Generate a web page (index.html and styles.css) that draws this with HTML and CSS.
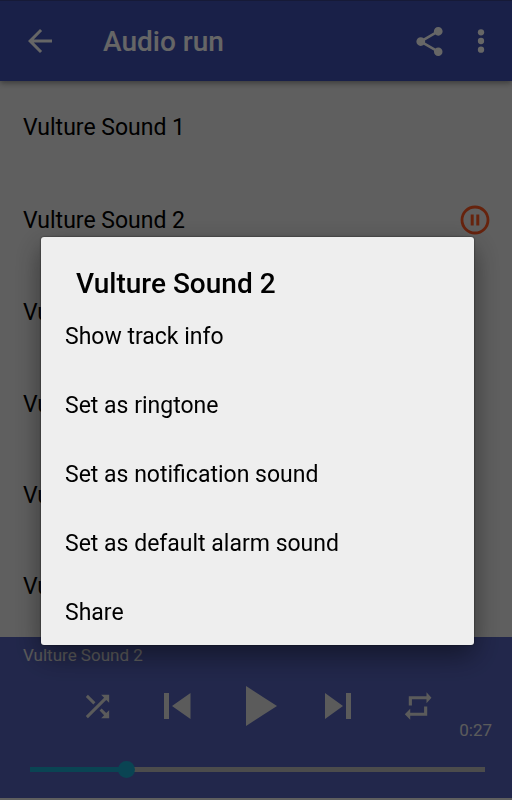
FILE: index.html
```html
<!DOCTYPE html>
<html lang="en">
<head>
    <meta charset="UTF-8">
    <meta name="viewport" content="width=device-width, initial-scale=1.0">
    <title>Audio run</title>
    <link rel="stylesheet" href="styles.css">
</head>
<body>
    <div class="app">
        <!-- top bar -->
        <header class="toolbar">
            <button type="button" class="icon-btn" aria-label="Back">
                <svg width="36" height="36" viewBox="0 0 24 24"><path d="M20 11H7.83l5.59-5.59L12 4l-8 8 8 8 1.41-1.41L7.83 13H20v-2z"/></svg>
            </button>
            <h1 class="title">Audio run</h1>
            <button type="button" class="icon-btn" aria-label="Share">
                <svg width="35" height="35" viewBox="0 0 24 24"><path d="M18 16.08c-.76 0-1.44.3-1.96.77L8.91 12.7c.05-.23.09-.46.09-.7s-.04-.47-.09-.7l7.05-4.11c.54.5 1.25.81 2.04.81 1.66 0 3-1.34 3-3s-1.34-3-3-3-3 1.34-3 3c0 .24.04.47.09.7L8.04 9.81C7.5 9.31 6.79 9 6 9c-1.66 0-3 1.34-3 3s1.34 3 3 3c.79 0 1.5-.31 2.04-.81l7.12 4.16c-.05.21-.08.43-.08.65 0 1.61 1.31 2.92 2.92 2.92s2.92-1.31 2.92-2.92-1.31-2.92-2.92-2.92z"/></svg>
            </button>
            <button type="button" class="icon-btn more" aria-label="More options">
                <svg width="36" height="36" viewBox="0 0 24 24"><circle cx="12" cy="6.2" r="2.1"/><circle cx="12" cy="12" r="2.1"/><circle cx="12" cy="17.8" r="2.1"/></svg>
            </button>
        </header>

        <!-- track list -->
        <ul class="tracks">
            <li>Vulture Sound 1</li>
            <li>
                Vulture Sound 2
                <button type="button" class="pause" aria-label="Pause">
                    <svg width="30" height="30" viewBox="0 0 30 30"><circle cx="15" cy="15" r="13" fill="none" stroke="currentColor" stroke-width="2.8"/><path d="M10.700 9.500h3v11h-3zM16.300 9.500h3v11h-3z"/></svg>
                </button>
            </li>
            <li>Vulture Sound 3</li>
            <li>Vulture Sound 4</li>
            <li>Vulture Sound 5</li>
            <li>Vulture Sound 6</li>
        </ul>

        <!-- player -->
        <footer class="player">
            <p class="playing">Vulture Sound 2</p>
            <div class="controls">
                <button type="button" class="icon-btn" aria-label="Shuffle">
                    <svg width="35" height="35" viewBox="0 0 24 24"><path d="M10.59 9.17L5.41 4 4 5.41l5.17 5.17 1.42-1.41zM14.5 4l2.04 2.04L4 18.59 5.41 20 17.96 7.46 20 9.5V4h-5.5zm.33 9.41l-1.41 1.41 3.13 3.13L14.5 20H20v-5.5l-2.04 2.04-3.13-3.13z"/></svg>
                </button>
                <button type="button" class="icon-btn" aria-label="Previous">
                    <svg width="28" height="28" viewBox="0 0 28 28"><path d="M1 1h5v26H1zM27.500 1v26L9 14z"/></svg>
                </button>
                <button type="button" class="icon-btn" aria-label="Play">
                    <svg width="38" height="40" viewBox="0 0 38 40"><path d="M7 0v40l31-20z"/></svg>
                </button>
                <button type="button" class="icon-btn" aria-label="Next">
                    <svg width="28" height="28" viewBox="0 0 28 28"><path d="M0 1v26l18-13zM21 1h5v26h-5z"/></svg>
                </button>
                <button type="button" class="icon-btn" aria-label="Repeat">
                    <svg width="34" height="34" viewBox="0 0 24 24"><path d="M5.500 5.200h12.500V2.300L21.500 6.200l-3.500 3.800V7.300H7.700v4.300H5.500zM18.500 18.800H6.500v2.900L2.700 17.800l3.800-3.800v2.700h9.800v-4.300h2.200z"/></svg>
                </button>
            </div>
            <p class="time">0:27</p>
            <input class="seek" type="range" min="0" max="100" value="20" aria-label="Position">
        </footer>
    </div>

    <!-- track menu -->
    <div class="overlay">
        <div class="dialog" role="dialog" aria-labelledby="dialog-title">
            <h2 class="dialog-title" id="dialog-title">Vulture Sound 2</h2>
            <div class="options">
                <button type="button">Show track info</button>
                <button type="button">Set as ringtone</button>
                <button type="button">Set as notification sound</button>
                <button type="button">Set as default alarm sound</button>
                <button type="button">Share</button>
            </div>
        </div>
    </div>
</body>
</html>
```
FILE: styles.css
```css
* {
    margin: 0;
    padding: 0;
    box-sizing: border-box;
}

body {
    font-family: Roboto, sans-serif;
    font-size: 23px;
    color: black;
    background-color: #eee;
}

button {
    border: none;
    background: none;
    font: inherit;
    color: inherit;
    cursor: pointer;
}

svg {
    display: block;
    fill: currentColor;
}

.app {
    display: flex;
    flex-direction: column;
    min-height: 100vh;
    padding-bottom: 2px;
}

.icon-btn {
    display: flex;
    justify-content: center;
    align-items: center;
}

/* Top bar */
.toolbar {
    display: flex;
    align-items: center;
    height: 81px;
    border-top: 1px solid #37428a;
    padding: 0 13px 0 22px;
    background-color: #3f51b5;
    color: white;
    box-shadow: 0 2px 6px rgba(0, 0, 0, 0.4);
}

.title {
    flex: 1;
    padding-left: 45px;
    font-size: 28px;
    font-weight: 500;
}

.more {
    margin-left: 16px;
}

/* Track list */
.tracks {
    flex: 1;
    display: flex;
    flex-direction: column;
    padding: 1px 0 5px;
    list-style: none;
}

.tracks li {
    flex: 1;
    display: flex;
    justify-content: space-between;
    align-items: center;
    padding: 0 22px 0 23px;
}

.pause {
    color: #ff5722;
}

/* Player */
.player {
    padding: 7px 20px 20px 23px;
    background-color: #5562bb;
    color: #e4e4e4;
}

.playing {
    font-size: 17px;
    line-height: 22px;
}

.controls {
    display: flex;
    justify-content: space-between;
    align-items: center;
    height: 40px;
    margin-top: 20px;
    padding: 0 57px;
}

.time {
    font-size: 17px;
    line-height: 22px;
    margin-top: -7px;
    text-align: right;
}

.seek {
    display: block;
    appearance: none;
    width: calc(100% - 14px);
    height: 17px;
    margin: 20px 7px 0;
    background: linear-gradient(to right, #1aaacf 21%, #bfbfbf 21%) center / 100% 5px no-repeat;
}

.seek::-webkit-slider-thumb {
    appearance: none;
    width: 17px;
    height: 17px;
    border-radius: 50%;
    background-color: #1aaacf;
}

/* Track menu */
.overlay {
    position: fixed;
    inset: 0;
    display: flex;
    align-items: center;
    padding: 82px 38px 0 41px;
    background-color: rgba(0, 0, 0, 0.6);
}

.dialog {
    width: 100%;
    border-radius: 3px;
    background-color: #eee;
    box-shadow: 0 0 2px rgba(0, 0, 0, 0.7), 0 10px 28px rgba(0, 0, 0, 0.45);
}

.dialog-title {
    height: 64px;
    padding: 29px 35px 0;
    font-size: 28px;
    font-weight: 500;
    line-height: 36px;
}

.options {
    display: grid;
    gap: 1px;
}

.options button {
    height: 68px;
    padding: 2px 24px 0;
    text-align: left;
}
```
